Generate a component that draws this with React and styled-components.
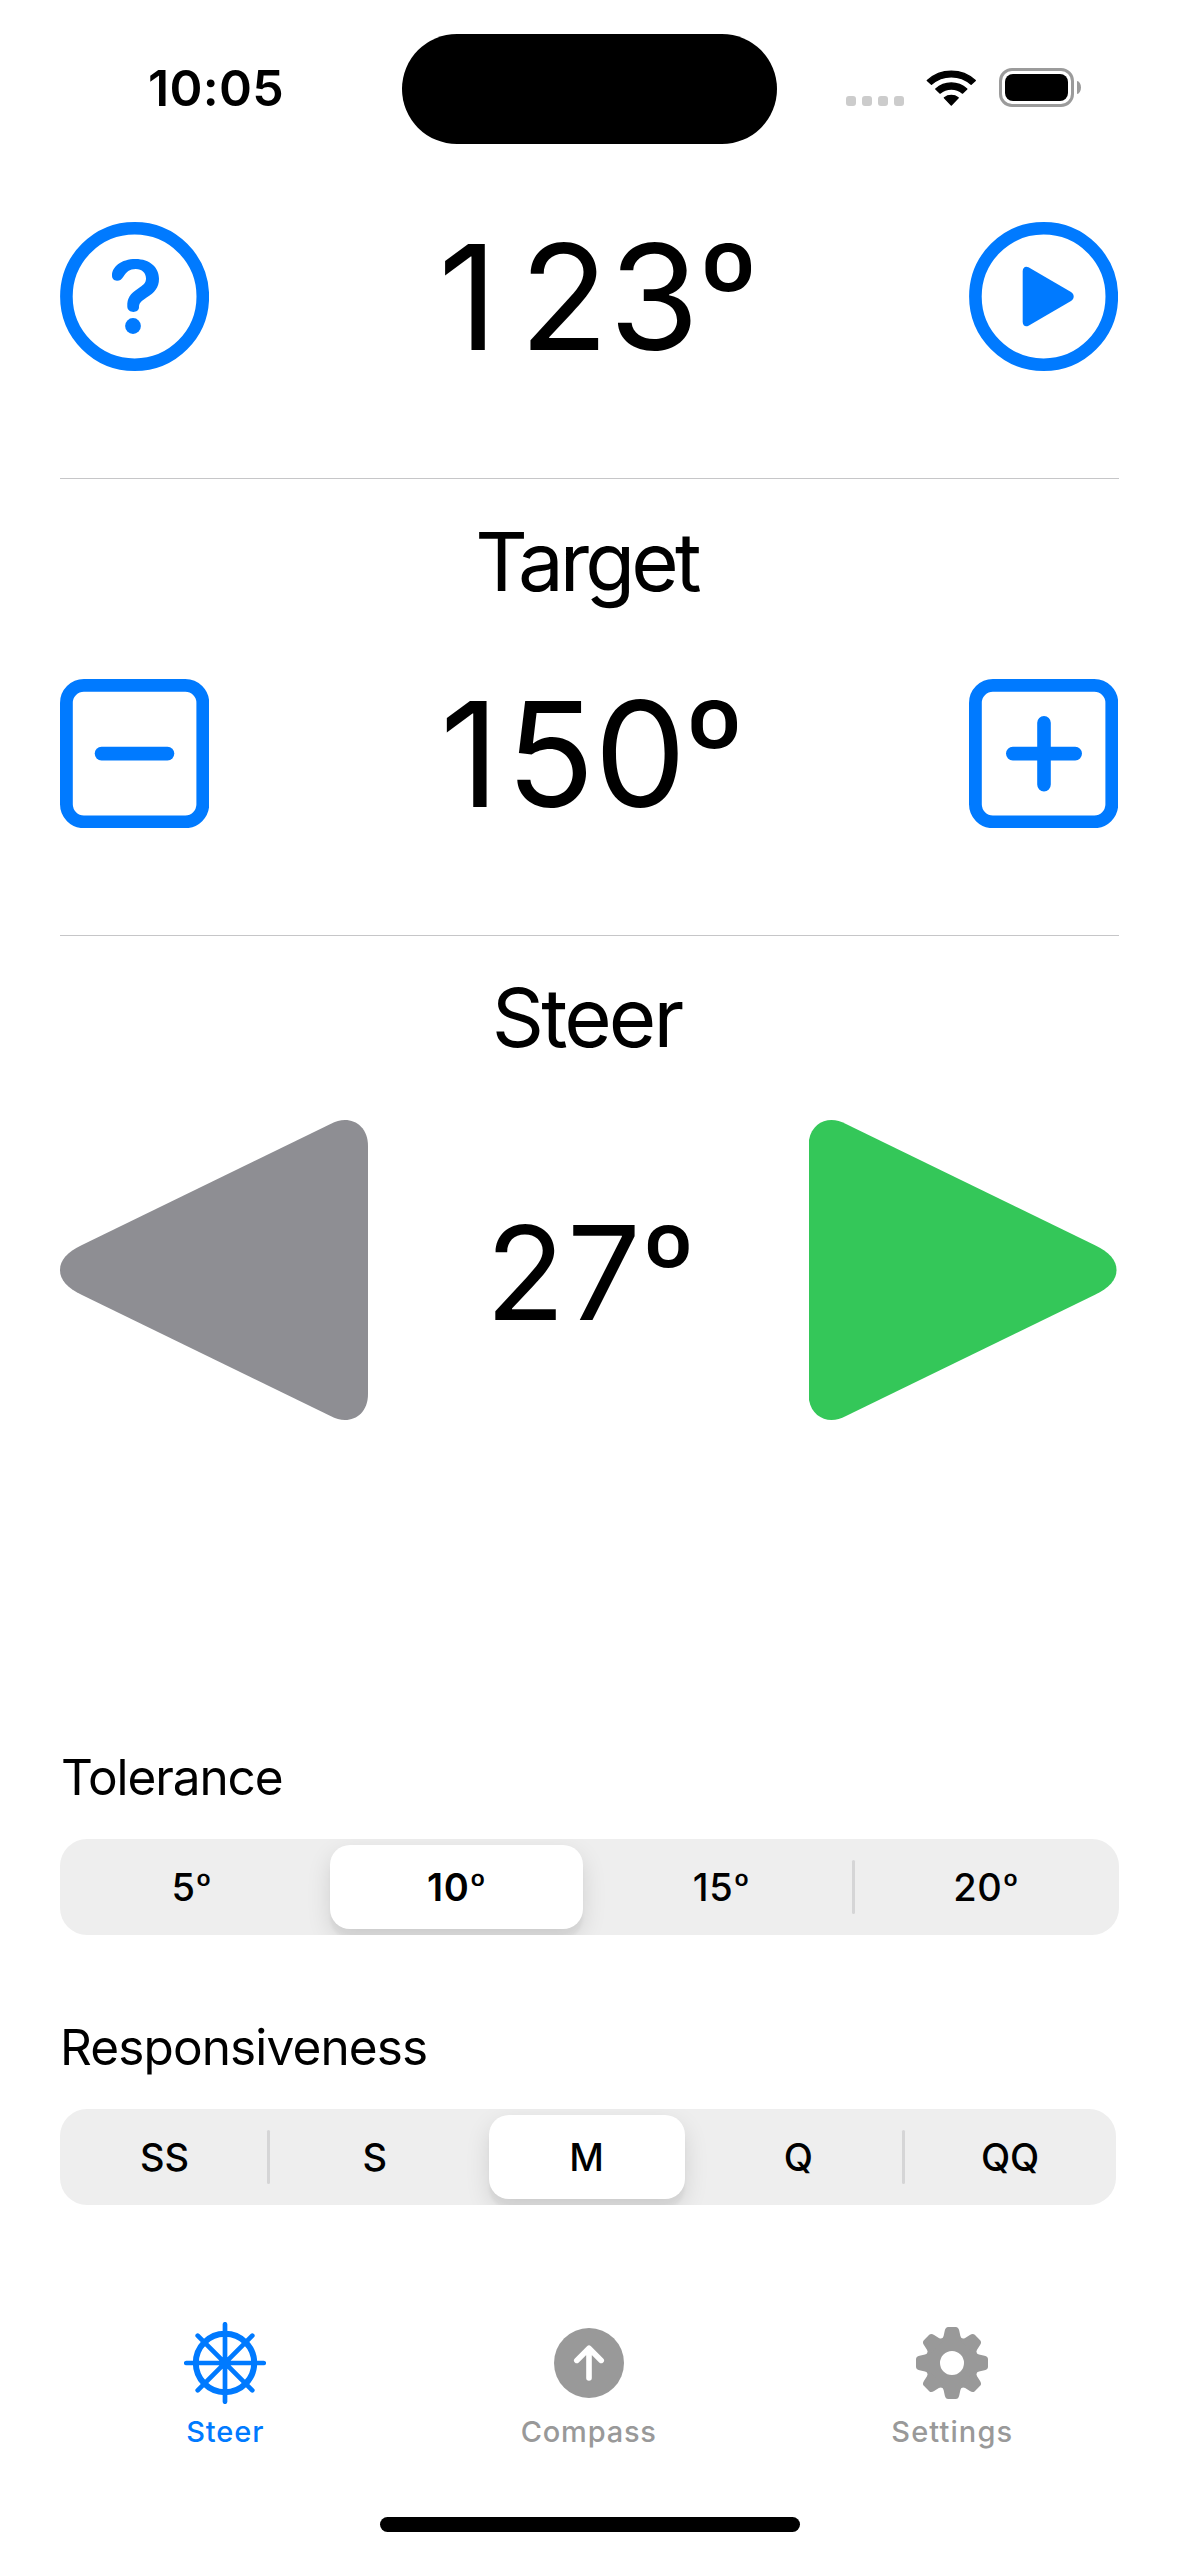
import React from "react";
import styled, { createGlobalStyle } from "styled-components";

const BLUE = "#007aff";

const GlobalStyle = createGlobalStyle`
  * { box-sizing: border-box; }
  body { margin: 0; background: #fff; }
  button { border: 0; padding: 0; margin: 0; background: none; font: inherit; color: inherit; }
  svg { display: block; }
`;

const Screen = styled.div`
  width: 1179px;
  height: 2556px;
  display: flex;
  flex-direction: column;
  background: #fff;
  color: #000;
  font-family: Inter, "Liberation Sans", sans-serif;
  overflow: hidden;
`;

const StatusBar = styled.header`
  display: grid;
  grid-template-columns: 402px 375px 1fr;
  height: 111px;
  margin-top: 33px;
  align-items: center;
`;

const Clock = styled.div`
  margin-top: -2px;
  padding-left: 148px;
  font-size: 50px;
  line-height: 60px;
  font-weight: 600;
  letter-spacing: 0.3px;
`;

const Island = styled.div`
  align-self: end;
  height: 110px;
  border-radius: 55px;
  background: #000;
`;

const StatusIcons = styled.div`
  display: flex;
  align-items: center;
  height: 39px;
  margin-top: -2px;
  padding-left: 69px;
`;

const CellDots = styled.div`
  display: flex;
  gap: 6px;
  align-self: flex-end;
  margin: 0 22px 1px 0;
`;

const CellDot = styled.i`
  width: 10px;
  height: 10px;
  border-radius: 3px;
  background: #ccc;
`;

const Battery = styled.div`
  width: 75px;
  height: 39px;
  margin-left: 22px;
  padding: 3px;
  border: 3px solid #9b9b9b;
  border-radius: 13px;
`;

const BatteryLevel = styled.div`
  height: 27px;
  border-radius: 8px;
  background: #000;
`;

const BatteryCap = styled.div`
  width: 4px;
  height: 13px;
  margin-left: 3px;
  border-radius: 0 4px 4px 0 / 0 6.5px 6.5px 0;
  background: #9b9b9b;
`;

const Main = styled.main`
  display: flex;
  flex-direction: column;
  padding: 0 60px;
`;

const ControlRow = styled.div`
  display: grid;
  grid-template-columns: ${(p) => p.$side}px 1fr ${(p) => p.$side}px;
  align-items: center;
  height: ${(p) => p.$height}px;
  margin-top: ${(p) => p.$top}px;
  padding-right: 1px;
`;

const Reading = styled.div`
  text-align: center;
  white-space: nowrap;
  line-height: 140px;
  font-size: ${(p) => p.$size}px;
  letter-spacing: ${(p) => p.$track}px;
  padding-left: ${(p) => p.$shift || 0}px;
  padding-top: ${(p) => p.$drop || 0}px;
`;

const LooseDigit = styled.span`
  letter-spacing: ${(p) => p.$track}px;
`;

const Degree = styled.span`
  display: inline-block;
  font-size: 0.86em;
  line-height: 0;
  vertical-align: 0.12em;
  transform: scaleX(1.07);
`;

const Divider = styled.hr`
  width: 100%;
  height: 1px;
  margin: 107px 0 0;
  border: 0;
  background: #c6c6c8;
`;

const Title = styled.h2`
  margin: ${(p) => p.$top}px 6px -1px 0;
  text-align: center;
  font-size: 81.5px;
  font-weight: 400;
  line-height: 100px;
  letter-spacing: ${(p) => p.$track}px;
`;

const FieldLabel = styled.label`
  margin-top: ${(p) => p.$top}px;
  padding-left: ${(p) => p.$inset}px;
  font-size: 49.5px;
  line-height: 60px;
  letter-spacing: ${(p) => p.$track}px;
`;

const Segments = styled.div`
  display: grid;
  grid-template-columns: ${(p) => p.$columns};
  width: ${(p) => p.$width}px;
  height: 96px;
  margin-top: 32px;
  border-radius: 27px;
  background: #eee;
  overflow: hidden;
`;

const Segment = styled.button`
  position: relative;
  display: flex;
  padding: 6px ${(p) => (p.$wide ? 7 : 8)}px 6px ${(p) => (p.$wide ? 5.5 : 8)}px;
  &::after {
    content: "";
    display: ${(p) => (p.$divided ? "block" : "none")};
    position: absolute;
    right: -1px;
    top: 21px;
    width: 3px;
    height: 54px;
    border-radius: 2px;
    background: #d5d5d6;
  }
`;

const SegmentFace = styled.span`
  flex: 1;
  height: 84px;
  border-radius: 20px;
  text-align: center;
  font-size: 38px;
  line-height: 84px;
  letter-spacing: ${(p) => p.$track || 0}px;
  font-weight: ${(p) => p.$weight || 500};
  background: ${(p) => (p.$on ? "#fff" : "transparent")};
  box-shadow: ${(p) => (p.$on ? "0 9px 24px rgba(0,0,0,.12), 0 9px 3px rgba(0,0,0,.04)" : "none")};
`;

const TabBar = styled.nav`
  display: grid;
  grid-template-columns: repeat(3, 1fr);
  padding: 0 45px 0 43.5px;
  margin-top: 117px;
`;

const Tab = styled.button`
  display: flex;
  flex-direction: column;
  align-items: center;
  gap: 10px;
  color: ${(p) => (p.$active ? BLUE : "#999")};
`;

const TabLabel = styled.span`
  font-size: 29px;
  line-height: 36px;
  font-weight: 500;
  letter-spacing: ${(p) => p.$track}px;
`;

const HomeIndicator = styled.div`
  width: 420px;
  height: 15px;
  margin: 67px auto 0;
  border-radius: 8px;
  background: #000;
`;

const Wifi = () => (
  <svg width="51" height="39" viewBox="0 0 51 39" stroke="#000" strokeWidth="1.4" strokeLinejoin="round">
    <path d="M1.3 12.4A35.6 35.6 0 0 1 49.3 12.4L45.1 16.3A29.8 29.8 0 0 0 5.5 16.3Z" />
    <path d="M9.8 21A23.2 23.2 0 0 1 40.8 21L36.6 25.1A17.6 17.6 0 0 0 14 25.1Z" />
    <path d="M18.4 29.7A11.4 11.4 0 0 1 32.2 29.7L25.3 37Z" />
  </svg>
);

const HelpIcon = () => (
  <svg width="149" height="149" viewBox="0 0 149 149" fill={BLUE}>
    <circle cx="74.6" cy="74.5" r="68.2" fill="none" stroke={BLUE} strokeWidth="12.6" />
    <path d="M52 53.5C52 45 61 37 75.5 37C90 37 99 45.5 99 56.7C99 65.5 94.5 70.5 87 75.3C81 79.2 79 81.3 79 85.3C79 91.6 67.4 91.6 67.3 84.5C67 76 70.5 71.6 77.5 67C83.5 63 86 61 86 56.5C86 51 82 47 75.8 47C69.5 47 66.3 50 63.5 54.5C61.8 57.3 60 58.7 57 58.7C54 58.7 52 56.7 52 53.5Z" />
    <circle cx="73" cy="104" r="7.9" />
  </svg>
);

const PlayIcon = () => (
  <svg width="149" height="149" viewBox="0 0 149 149" fill={BLUE}>
    <circle cx="74.6" cy="74.5" r="68.2" fill="none" stroke={BLUE} strokeWidth="12.6" />
    <path d="M53.7 49C53.7 45.5 56.5 43.6 59.5 45.3L102 70C105.6 72.3 105.6 76.7 102 79L59.5 103.7C56.5 105.4 53.7 103.5 53.7 100Z" />
  </svg>
);

const StepIcon = ({ plus }) => (
  <svg width="149" height="149" viewBox="0 0 149 149" fill="none" stroke={BLUE}>
    <rect x="6.4" y="6.4" width="136.4" height="136.4" rx="17.5" strokeWidth="12.8" />
    {plus ? (
      <path d="M43.8 74.6H106.2M75 43.8V105.6" strokeWidth="13.6" strokeLinecap="round" />
    ) : (
      <path d="M41.5 74.6H107.5" strokeWidth="13.6" strokeLinecap="round" />
    )}
  </svg>
);

const SteerArrow = ({ color, flip }) => (
  <svg width="308" height="300" viewBox="0 0 308 300" fill={color}>
    <path
      transform={flip ? "translate(307.5 0) scale(-1 1)" : undefined}
      d="M308 26V274C308 291 297 300 285 300C280 300 276 298.7 270 295.8L22 175C7 167.600 0 160 0 150C0 140 7 132.400 22 125L270 4.200C276 1.300 280 0 285 0C297 0 308 9 308 26Z"
    />
  </svg>
);

const WheelIcon = () => (
  <svg width="82" height="82" viewBox="-41 -41 82 82" fill="none" stroke="currentColor" strokeLinecap="round">
    <circle r="29.200" strokeWidth="6" />
    <path d="M0-38.700V38.700M-38.700 0H38.700M-27.300-27.300L27.300 27.300M27.300-27.300L-27.300 27.300" strokeWidth="4.700" />
    <circle r="6" fill="currentColor" stroke="none" />
  </svg>
);

const CompassIcon = () => (
  <svg width="82" height="82" viewBox="-41 -41 82 82">
    <circle r="35" fill="currentColor" />
    <path d="M0-14.500V15M-12.200-2.600L0-14.800L12.200-2.600" fill="none" stroke="#fff" strokeWidth="5.600" strokeLinecap="round" strokeLinejoin="round" />
  </svg>
);

const GEAR_TEETH = [0, 45, 90, 135, 180, 225, 270, 315];

const GearIcon = () => (
  <svg width="82" height="82" viewBox="-41 -41 82 82" fill="currentColor">
    <circle r="18.500" fill="none" stroke="currentColor" strokeWidth="13" />
    {GEAR_TEETH.map((angle) => (
      <path
        key={angle}
        transform={`rotate(${angle})`}
        d="M-10.700-22V-24.200Q-8.900-25-8.400-27L-7.200-32.500Q-6.400-36-3.800-36H3.800Q6.400-36 7.200-32.500L8.400-27Q8.900-25 10.700-24.200V-22Z"
      />
    ))}
  </svg>
);

function WithDegree({ text }) {
  if (!text.endsWith("º")) return text;
  return (
    <>
      {text.slice(0, -1)}
      <Degree>º</Degree>
    </>
  );
}

function SegmentedControl({ width, columns, options, selected, weight, wide, track }) {
  return (
    <Segments $width={width} $columns={columns}>
      {options.map((label, i) => {
        const on = i === selected;
        const divided = i < options.length - 1 && !on && i + 1 !== selected;
        return (
          <Segment key={label} $divided={divided} $wide={wide}>
            <SegmentFace $on={on} $weight={on ? weight : 500} $track={track}>
              <WithDegree text={label} />
            </SegmentFace>
          </Segment>
        );
      })}
    </Segments>
  );
}

export default function App() {
  return (
    <Screen>
      <GlobalStyle />
      <StatusBar>
        <Clock>10:05</Clock>
        <Island />
        <StatusIcons>
          <CellDots>
            <CellDot />
            <CellDot />
            <CellDot />
            <CellDot />
          </CellDots>
          <Wifi />
          <Battery>
            <BatteryLevel />
          </Battery>
          <BatteryCap />
        </StatusIcons>
      </StatusBar>

      <Main>
        <ControlRow $side={149} $height={149} $top={78}>
          <button aria-label="Help"><HelpIcon /></button>
          <Reading $size={146} $track={0.5} $shift={17}>
            <LooseDigit $track={22}>1</LooseDigit>
            <WithDegree text="23º" />
          </Reading>
          <button aria-label="Start"><PlayIcon /></button>
        </ControlRow>
        <Divider />

        <Title $top={33} $track={-3.9}>Target</Title>
        <ControlRow $side={149} $height={149} $top={68}>
          <button aria-label="Decrease"><StepIcon /></button>
          <Reading $size={146} $track={-0.5} $shift={4}>
            <LooseDigit $track={6.5}>1</LooseDigit>
            <WithDegree text="50º" />
          </Reading>
          <button aria-label="Increase"><StepIcon plus /></button>
        </ControlRow>
        <Divider />

        <Title $top={32} $track={-2.9}>Steer</Title>
        <ControlRow $side={309} $height={300} $top={53}>
          <SteerArrow color="#8e8e93" />
          <Reading $size={130.5} $track={2} $drop={5} $shift={3}><WithDegree text="27º" /></Reading>
          <SteerArrow color="#34c759" flip />
        </ControlRow>

        <FieldLabel $top={327} $inset={1} $track={-1.1}>Tolerance</FieldLabel>
        <SegmentedControl
          width={1059}
          columns="repeat(4, 1fr)"
          options={["5º", "10º", "15º", "20º"]}
          selected={1}
          weight={600}
          track={0.8}
          wide
        />

        <FieldLabel $top={82} $inset={0} $track={-0.88}>Responsiveness</FieldLabel>
        <SegmentedControl
          width={1056}
          columns="209px repeat(4, 1fr)"
          options={["SS", "S", "M", "Q", "QQ"]}
          selected={2}
          weight={500}
        />
      </Main>

      <TabBar>
        <Tab $active>
          <WheelIcon />
          <TabLabel $track={0.9}>Steer</TabLabel>
        </Tab>
        <Tab>
          <CompassIcon />
          <TabLabel $track={0.8}>Compass</TabLabel>
        </Tab>
        <Tab>
          <GearIcon />
          <TabLabel $track={1.1}>Settings</TabLabel>
        </Tab>
      </TabBar>
      <HomeIndicator />
    </Screen>
  );
}
